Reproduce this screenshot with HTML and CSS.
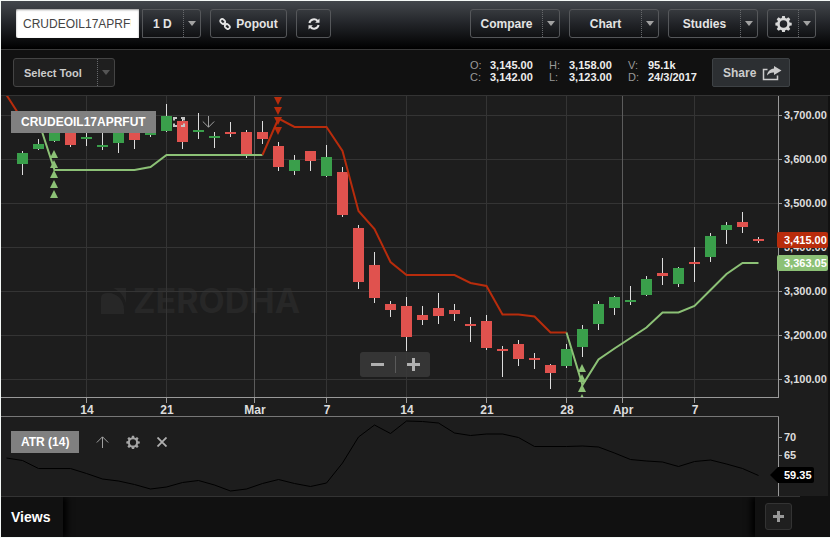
FILE: index.html
```html
<!DOCTYPE html>
<html lang="en">
<head>
    <meta charset="UTF-8">
    <meta name="viewport" content="width=device-width, initial-scale=1.0">
    <title>CRUDEOIL17APRFUT</title>
    <link rel="stylesheet" href="styles.css">
</head>
<body>
    <header class="topbar">
        <input class="symbol" type="text" value="CRUDEOIL17APRFUT" aria-label="Symbol">
        <div class="dropdown period">
            <select aria-label="Period">
                <option>1 D</option>
                <option>1 W</option>
            </select>
            <span class="caret"></span>
        </div>
        <button class="btn popout">
            <svg width="12" height="12" viewBox="0 0 12 12" fill="none" stroke="#e4e4e4" stroke-width="1.8">
                <rect x="1" y="1.500" width="5.500" height="4" rx="2" transform="rotate(45 3.700 3.500)"/>
                <rect x="5.500" y="6.500" width="5.500" height="4" rx="2" transform="rotate(45 8.300 8.500)"/>
                <path d="M4.600 4.600l2.800 2.800"/>
            </svg>
            Popout
        </button>
        <button class="btn refresh" aria-label="Refresh">
            <svg width="12" height="12" viewBox="0 0 12 12" fill="none" stroke="#e4e4e4" stroke-width="2">
                <path d="M1.4 5A4.7 4.7 0 0 1 9.6 3M10.6 7A4.7 4.7 0 0 1 2.4 9"/>
                <path d="M11.5 .5v4.3H7.2zM.5 11.5V7.2h4.3z" fill="#e4e4e4" stroke="none"/>
            </svg>
        </button>
        <nav class="menus">
            <button class="dropdown menu"><span>Compare</span><span class="caret"></span></button>
            <button class="dropdown menu"><span>Chart</span><span class="caret"></span></button>
            <button class="dropdown menu"><span>Studies</span><span class="caret"></span></button>
            <button class="dropdown settings" aria-label="Settings">
                <svg width="17" height="17" viewBox="0 0 18 18"><use href="#gear"/></svg>
                <span class="caret"></span>
            </button>
        </nav>
    </header>

    <div class="toolbar">
        <div class="dropdown tool">
            <select aria-label="Drawing tool">
                <option>Select Tool</option>
            </select>
            <span class="caret"></span>
        </div>
        <dl class="quote">
            <dt>O:</dt><dd>3,145.00</dd><dt>H:</dt><dd>3,158.00</dd><dt>V:</dt><dd>95.1k</dd>
            <dt>C:</dt><dd>3,142.00</dd><dt>L:</dt><dd>3,123.00</dd><dt>D:</dt><dd>24/3/2017</dd>
        </dl>
        <button class="share">
            Share
            <svg width="20" height="16" viewBox="0 0 20 16">
                <path d="M5.5 4.5H1.5v10h14v-4" fill="none" stroke="#ccc" stroke-width="1.5"/>
                <path d="M12 1l7.500 4.500L12 10V7.500C9 7.300 7 8.200 5 10.500 5.500 6.500 8 4 12 3.500z" fill="#ccc"/>
            </svg>
        </button>
    </div>

    <main class="chart">
        <svg class="plot" viewBox="1 96 829 401">
            <defs>
                <path id="gear" fill-rule="evenodd" d="M7.600 1h2.800l.4 2.200 1.500.6 1.900-1.300 2 2-1.300 1.900.6 1.500 2.200.3v2.800l-2.200.4-.6 1.500 1.300 1.900-2 2-1.900-1.300-1.500.6-.4 2.200H7.600l-.4-2.200-1.500-.6-1.900 1.300-2-2 1.300-1.900-.6-1.500L.4 11V8.200l2.100-.4.6-1.500-1.300-1.800 2-2 1.900 1.300 1.500-.6zM9 5.600a4 4 0 1 0 0 8 4 4 0 0 0 0-8z"/>
                <clipPath id="priceArea"><rect x="1" y="96" width="777" height="301"/></clipPath>
            </defs>
            <rect class="panel" x="1" y="96" width="827" height="400"/>
            <g class="watermark">
                <path d="M101 314v-16q0-5 7-5c10 0 16 8 16 16v5zM113 288h13v15c-2-7-6-12-13-15z"/>
                <text x="133" y="313">ZERODHA</text>
            </g>
            <g id="grid"></g>
            <g id="candles"></g>
            <g clip-path="url(#priceArea)">
                <polyline class="trend down" points="6.500,95 22.500,120 38.500,121"/>
                <polyline class="trend up" points="38.500,121 54.500,170 134.500,170 150.500,167 166.500,155 262.500,155"/>
                <polyline class="trend down" points="262.500,155 278.500,118.500 294.500,127 326.500,127 342.500,151 358.500,211 374.500,229 390.500,262 406.500,275 454.500,275 470.500,283 486.500,286 502.500,314.500 518.500,314.500 534.500,316.500 550.500,332.500 566.500,332.500"/>
                <polyline class="trend up" points="566.500,332.500 582.500,385 598.500,359.500 614.500,348.500 646.500,327.500 662.500,312.500 678.500,312.500 694.500,306 710.500,290 726.500,274 742.500,263 758.500,263"/>
                <g id="signals"></g>
            </g>
            <path class="axis" d="M1 397.500h778M778.500 96v302M778.500 416v80"/>
            <path class="divider" d="M1 416.500h778"/>
            <path class="edge" d="M1 496.500h799"/>
            <polyline class="atr" points="6.500,458 22.500,460.500 38.500,468.500 70.500,468.500 86.500,473.500 102.500,479 118.500,481 134.500,484.500 150.500,489 166.500,487 182.500,482.500 198.500,480.500 214.500,485 230.500,491 246.500,489 262.500,483.500 278.500,479.500 294.500,483.500 310.500,486.500 326.500,483 342.500,463 358.500,437 374.500,425 390.500,433.500 406.500,421 422.500,421.500 438.500,423 454.500,433 470.500,435.500 486.500,434 502.500,434 518.500,437.500 534.500,446.500 566.500,446.500 582.500,446 598.500,447 614.500,453 630.500,459.500 646.500,461 662.500,462 678.500,466.500 694.500,461.500 710.500,460 726.500,464 742.500,468.500 758.500,475.500"/>
            <g id="labels"></g>
            <rect class="tag-down" x="777" y="232" width="51" height="16" rx="2"/>
            <text class="price tag-text" x="784" y="244">3,415.00</text>
            <rect class="tag-up" x="777" y="255" width="51" height="16" rx="2"/>
            <text class="price tag-text" x="784" y="267">3,363.05</text>
            <path class="tag-atr" d="M770 475l8-8h34q2 0 2 2v12q0 2-2 2h-34z"/>
            <text class="price tag-text" x="784" y="479">59.35</text>
        </svg>

        <div class="panel-title main-title">
            <span class="name">CRUDEOIL17APRFUT</span>
            <button class="icon" aria-label="Maximize">
                <svg width="12" height="10" viewBox="0 0 12 10" fill="none" stroke="#c4c4c4" stroke-width="2">
                    <path d="M1 3.500V1h3M8 1h3v2.500M11 6.500V9H8M4 9H1V6.500"/>
                </svg>
            </button>
            <button class="icon" aria-label="Move down">
                <svg width="13" height="12" viewBox="0 0 13 12" fill="none" stroke="#a0a0a0">
                    <path d="M6.500 0v11M.8 5.500l5.700 5.700 5.700-5.700"/>
                </svg>
            </button>
        </div>

        <div class="zoom">
            <button aria-label="Zoom out"><svg width="13" height="13"><path d="M0 5h13v3H0z" fill="#b0b0b0"/></svg></button>
            <button aria-label="Zoom in"><svg width="13" height="13"><path d="M0 5h5V0h3v5h5v3H8v5H5V8H0z" fill="#b0b0b0"/></svg></button>
        </div>

        <div class="panel-title study-title">
            <span class="name">ATR (14)</span>
            <button class="icon" aria-label="Move up">
                <svg width="13" height="12" viewBox="0 0 13 12" fill="none" stroke="#a0a0a0">
                    <path d="M6.500 12V1M.8 6.500L6.500.8l5.700 5.700"/>
                </svg>
            </button>
            <button class="icon" aria-label="Edit study">
                <svg width="14" height="14" viewBox="0 0 18 18"><use href="#gear" fill="#a5a5a5"/></svg>
            </button>
            <button class="icon" aria-label="Remove study">
                <svg width="10" height="10" viewBox="0 0 10 10" stroke="#b0b0b0" stroke-width="1.8">
                    <path d="M.5 .5l9 9M9.500 .5l-9 9"/>
                </svg>
            </button>
        </div>
    </main>

    <footer class="views">
        <h2>Views</h2>
        <div class="add">
            <button aria-label="Add view"><svg width="11" height="11"><path d="M0 4h4V0h3v4h4v3H7v4H4V7H0z" fill="#999"/></svg></button>
        </div>
    </footer>

    <script src="chart.js"></script>
</body>
</html>
```
FILE: styles.css
```css
* {
    box-sizing: border-box;
}
body {
    margin: 0;
    padding: 1px 0 1px 1px;
    min-height: 100vh;
    display: flex;
    flex-direction: column;
    background: #f4f8f6;
    color: #e4e4e4;
    font-family: "Liberation Sans", Arial, sans-serif;
    font-size: 12px;
}
button, select, input {
    font: inherit;
    color: inherit;
}
button {
    padding: 0;
    border: none;
    background: none;
    cursor: pointer;
}
svg {
    display: block;
}

/* top bar */
.topbar {
    display: flex;
    padding: 8px 14px 11px 15px;
    background: linear-gradient(#43474c, #202226 50%, #000);
    border-bottom: 1px solid #3a3a3a;
    font-weight: bold;
}
.symbol {
    width: 123px;
    height: 29px;
    margin-right: 3px;
    padding: 0 8px 0 7px;
    border: none;
    border-radius: 2px 0 0 2px;
    background: #fff;
    box-shadow: inset 0 1px 2px #999;
    color: #444;
    font-weight: normal;
}
.dropdown, .btn {
    height: 29px;
    border: 1px solid #55575a;
    border-radius: 3px;
    font-weight: bold;
}
.dropdown {
    display: grid;
    grid-template-columns: 1fr 17px;
    align-items: center;
    justify-items: center;
}
.dropdown select {
    grid-area: 1 / 1 / 2 / 3;
    width: 100%;
    height: 27px;
    padding: 0 10px;
    appearance: none;
    border: none;
    background: none;
}
.caret {
    grid-area: 1 / 2;
    width: 100%;
    height: 27px;
    display: grid;
    place-items: center;
    border-left: 1px dotted #66686b;
    pointer-events: none;
}
.caret::after {
    content: "";
    border: 4px solid transparent;
    border-top: 5px solid #a2a2a2;
    border-bottom: none;
}
.period {
    width: 59px;
    margin-right: 9px;
    border-radius: 0 3px 3px 0;
}
.btn {
    display: flex;
    align-items: center;
    justify-content: center;
    gap: 5px;
}
.popout {
    width: 77px;
    margin-right: 9px;
}
.refresh {
    width: 35px;
}
.menus {
    display: flex;
    gap: 9px;
    margin-left: auto;
}
.menu {
    width: 90px;
}
.settings {
    width: 49px;
    fill: #d8d8d8;
}

/* tool row */
.toolbar {
    display: flex;
    align-items: center;
    height: 46px;
    padding: 0 40px 0 12px;
    background: #111;
    border-bottom: 1px solid #333;
}
.tool {
    width: 102px;
    margin-right: auto;
    border-color: #444;
    background: #1f1f1f;
    color: #ccc;
    font-size: 11px;
}
.tool .caret::after {
    border-top-color: #555;
}
.quote {
    display: grid;
    grid-template-columns: 20px 59px 20px 59px 20px 64px;
    margin: 0;
    padding-bottom: 4px;
    font-size: 11px;
    line-height: 12px;
}
.quote dt {
    color: #999;
}
.quote dd {
    margin: 0;
    color: #eee;
    font-weight: bold;
}
.share {
    display: flex;
    align-items: center;
    justify-content: space-between;
    width: 78px;
    height: 29px;
    padding: 0 7px 0 10px;
    border: 1px solid #3e4245;
    border-radius: 2px;
    background: #2c2f32;
    color: #ccc;
    font-weight: bold;
}

/* chart */
.chart {
    position: relative;
    background: #111;
}
.plot {
    width: 100%;
    height: auto;
}
.panel {
    fill: #1d1d1d;
}
.watermark {
    fill: #272727;
    font: bold 34px Inter, sans-serif;
}
.gridline {
    stroke: #343434;
}
.month {
    stroke: #5c5c5c;
}
.axis, .tick {
    fill: none;
    stroke: #999;
}
.divider {
    stroke: #777;
}
.edge {
    stroke: #333;
}
.wick {
    fill: #ddd;
}
.gain {
    fill: #3a9f4b;
}
.loss {
    fill: #e0524e;
}
.trend {
    fill: none;
    stroke-width: 2;
}
.up {
    stroke: #8cc176;
}
.down {
    stroke: #b82c0c;
}
.buy, .tag-up {
    fill: #8cc176;
}
.sell, .tag-down {
    fill: #b82c0c;
}
.atr {
    fill: none;
    stroke: #000;
}
.tag-atr {
    fill: #000;
}
.price, .date {
    fill: #ddd;
    font-size: 11px;
    font-weight: bold;
}
.date {
    font-size: 12px;
    text-anchor: middle;
}
.tag-text {
    fill: #fff;
}
.panel-title {
    position: absolute;
    left: 10px;
    display: flex;
    align-items: center;
    gap: 17px;
}
.main-title {
    top: 15px;
}
.study-title {
    top: 335px;
}
.name {
    padding: 0 10px;
    background: #808080;
    color: #fff;
    font-weight: bold;
    line-height: 22px;
}
.zoom {
    position: absolute;
    left: 359px;
    top: 256px;
    display: flex;
    align-items: center;
    height: 25px;
    border-radius: 3px;
    background: rgba(56, 56, 56, 0.9);
}
.zoom button {
    display: grid;
    place-items: center;
    width: 35px;
    height: 17px;
}
.zoom button + button {
    border-left: 1px solid #5a5a5a;
}

/* views */
.views {
    display: flex;
    flex: 1;
    justify-content: space-between;
    overflow: hidden;
    background: #111;
}
.views h2 {
    margin: 0;
    padding: 0 13px 0 10px;
    box-shadow: 4px 0 6px #000;
    color: #fff;
    font-size: 14px;
    line-height: 40px;
}
.add {
    width: 75px;
    padding: 6px 10px;
    box-shadow: -4px 0 6px #000;
}
.add button {
    display: grid;
    place-items: center;
    width: 27px;
    height: 27px;
    border: 1px solid #333;
    border-radius: 3px;
    background: #1f1f1f;
}
```
FILE: chart.js
```js
// each candle: high, low, body top, body bottom, 1 = gain / 0 = loss
const candles = [
    [151, 175, 153, 164, 1], [139, 150, 144, 149, 1], [125, 142, 128, 141, 1],
    [125, 147, 128, 145, 0], [130, 146, 137, 139, 1], [130, 150, 145, 147, 1],
    [125, 153, 128, 143, 1], [125, 149, 128, 140, 0], [125, 137, 128, 135, 1],
    [104, 132, 116, 131, 1], [118, 149, 121, 142, 0], [113, 139, 130, 132, 1],
    [132, 148, 136, 138, 1], [122, 137, 132, 134, 0], [130, 158, 132, 154, 0],
    [121, 144, 132, 139, 0], [142, 171, 146, 167, 0], [155, 175, 160, 171, 1],
    [151, 171, 151, 161, 0], [145, 177, 157, 176, 1], [167, 217, 172, 215, 0],
    [225, 289, 228, 282, 0], [252, 303, 265, 298, 0], [301, 317, 304, 310, 0],
    [297, 351, 306, 337, 0], [306, 325, 315, 320, 0], [293, 324, 308, 316, 0],
    [304, 321, 310, 314, 0], [317, 342, 324, 326, 0], [315, 350, 321, 348, 0],
    [346, 377, 349, 351, 0], [340, 366, 344, 359, 0], [353, 369, 358, 360, 0],
    [364, 389, 365, 373, 0], [344, 368, 349, 366, 1], [325, 357, 329, 347, 1],
    [301, 330, 304, 324, 1], [296, 315, 297, 308, 1], [286, 305, 300, 302, 1],
    [276, 296, 279, 295, 1], [258, 285, 273, 276, 0], [267, 287, 268, 284, 1],
    [247, 282, 262, 264, 0], [233, 262, 236, 257, 1], [222, 244, 225, 230, 1],
    [212, 233, 222, 227, 0], [237, 243, 239, 241, 0]
];

const prices = ['3,700.00', '3,600.00', '3,500.00', '3,400.00', '3,300.00', '3,200.00', '3,100.00'];

const dates = [
    [86, '14'], [166, '21'], [254, 'Mar'], [326, '7'], [406, '14'],
    [486, '21'], [566, '28'], [622, 'Apr'], [694, '7']
];

const grid = document.getElementById('grid');
const labels = document.getElementById('labels');

function add(parent, name, attrs, text) {
    const el = document.createElementNS('http://www.w3.org/2000/svg', name);
    for (const key in attrs) el.setAttribute(key, attrs[key]);
    if (text) el.textContent = text;
    parent.appendChild(el);
}

prices.forEach((price, i) => {
    const y = 115 + i * 44;
    add(grid, 'path', { class: 'gridline', d: `M1 ${y + 0.5}h777` });
    add(labels, 'path', { class: 'tick', d: `M779 ${y + 0.5}h3` });
    add(labels, 'text', { class: 'price', x: 784, y: y + 4 }, price);
});

[[437, '70'], [455, '65']].forEach(([y, value]) => {
    add(labels, 'path', { class: 'tick', d: `M779 ${y + 0.5}h3` });
    add(labels, 'text', { class: 'price', x: 784, y: y + 4 }, value);
});

dates.forEach(([x, date]) => {
    add(grid, 'path', { class: isNaN(date) ? 'month' : 'gridline', d: `M${x + 0.5} 96v301` });
    add(labels, 'path', { class: 'tick', d: `M${x + 0.5} 398v5` });
    add(labels, 'text', { class: 'date', x: x + 1, y: 414 }, date);
});

candles.forEach(([high, low, top, bottom, gain], i) => {
    const x = 22 + i * 16;
    const group = document.getElementById('candles');
    add(group, 'rect', { class: 'wick', x, y: high, width: 1, height: low - high });
    add(group, 'rect', { class: gain ? 'gain' : 'loss', x: x - 5, y: top, width: 11, height: bottom - top });
});

// arrows where the trend flips
const signals = document.getElementById('signals');
[150, 160, 170, 180, 190].forEach(y => add(signals, 'path', { class: 'buy', d: `M54 ${y}l4 8h-8z` }));
[97, 107, 117, 127].forEach(y => add(signals, 'path', { class: 'sell', d: `M274 ${y}h8l-4 8z` }));
[364, 374, 384, 394].forEach(y => add(signals, 'path', { class: 'buy', d: `M582 ${y}l4 8h-8z` }));
```
